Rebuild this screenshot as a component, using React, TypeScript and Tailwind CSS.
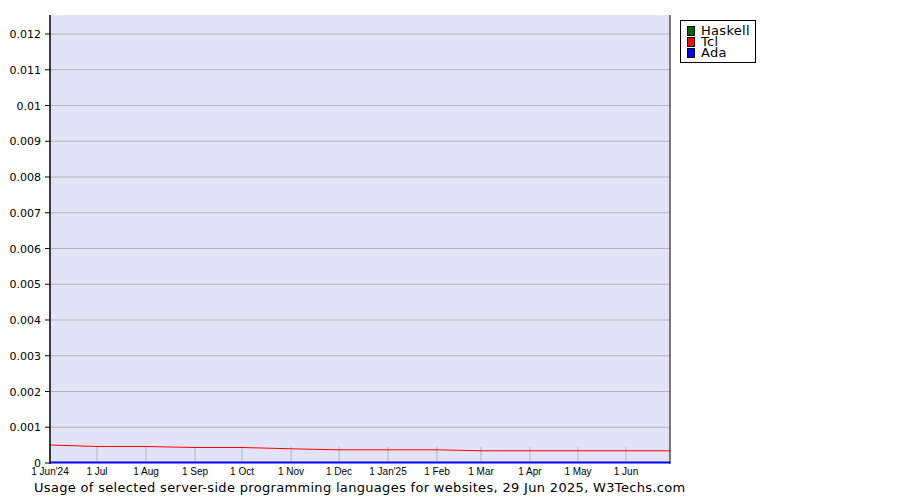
import React from 'react';

const Y_TOP = 34;
const Y_ZERO = 463;
const STEP = (Y_ZERO - Y_TOP) / 12;

const yLabels = ['0', '0.001', '0.002', '0.003', '0.004', '0.005', '0.006', '0.007', '0.008', '0.009', '0.01', '0.011', '0.012'];

const months: [string, number][] = [
  ["1 Jun'24", 50], ['1 Jul', 97], ['1 Aug', 146], ['1 Sep', 195], ['1 Oct', 242], ['1 Nov', 291],
  ['1 Dec', 339], ["1 Jan'25", 388], ['1 Feb', 437], ['1 Mar', 481], ['1 Apr', 530], ['1 May', 578], ['1 Jun', 626],
];

const tcl = 'M50,445 L97,446.5 L146,446.5 L195,447.5 L242,447.5 L291,448.8 L339,449.8 L437,449.8 L481,450.8 L670,450.8';

const legend = [
  { name: 'Haskell', color: 'bg-[#006400]' },
  { name: 'Tcl', color: 'bg-[#ff0000]' },
  { name: 'Ada', color: 'bg-[#0000ff]' },
];

const App: React.FC = () => {
  return (
    <div className="w-[900px] h-[500px] bg-white overflow-hidden" style={{ fontFamily: '"DejaVu Sans", sans-serif' }}>
      <div className="flex">
        <svg width="680" height="478" className="block shrink-0">
          <rect x="50" y="15" width="620" height="448" fill="#e3e3f8" />
          {yLabels.map((l, i) => {
            const y = Y_ZERO - i * STEP;
            return (
              <g key={l}>
                {i > 0 && <line x1="50" x2="670" y1={y} y2={y} stroke="#b4b4b4" strokeWidth="1" />}
                <line x1="45" x2="50" y1={y} y2={y} stroke="#000" strokeWidth="1" />
                <text x="41" y={y + 4} textAnchor="end" fontSize="11" fill="#000">{l}</text>
              </g>
            );
          })}
          {months.map(([m, x]) => (
            <g key={m}>
              <line x1={x} x2={x} y1="447" y2="463" stroke="#b4b4b4" strokeWidth="1" />
              <text x={x} y="475" textAnchor="middle" fontSize="10" fill="#000" style={{ fontFamily: '"Liberation Sans", sans-serif' }}>{m}</text>
            </g>
          ))}
          <path d={tcl} fill="none" stroke="#ff0000" strokeWidth="1" />
          <line x1="50" x2="670" y1="462.5" y2="462.5" stroke="#0000ff" strokeWidth="2" />
          <line x1="50" x2="50" y1="15" y2="464" stroke="#000" strokeWidth="1.5" />
          <line x1="670" x2="670" y1="15" y2="464" stroke="#000" strokeWidth="1" />
        </svg>
        <div className="mt-[20px] h-[43px] w-[76px] border border-black pl-[6px] pt-[4px] text-[13px] leading-[11px] tracking-[0.3px]">
          {legend.map((l) => (
            <div key={l.name} className="flex items-center gap-[6px] h-[11px]">
              <span className={`w-[8px] h-[10px] border border-black ${l.color}`} />
              <span>{l.name}</span>
            </div>
          ))}
        </div>
      </div>
      <div className="pl-[34px] pt-[2px] text-[13px] leading-[16px] tracking-[0.32px] text-[#000]">
        Usage of selected server-side programming languages for websites, 29 Jun 2025, W3Techs.com
      </div>
    </div>
  );
};

export default App;
